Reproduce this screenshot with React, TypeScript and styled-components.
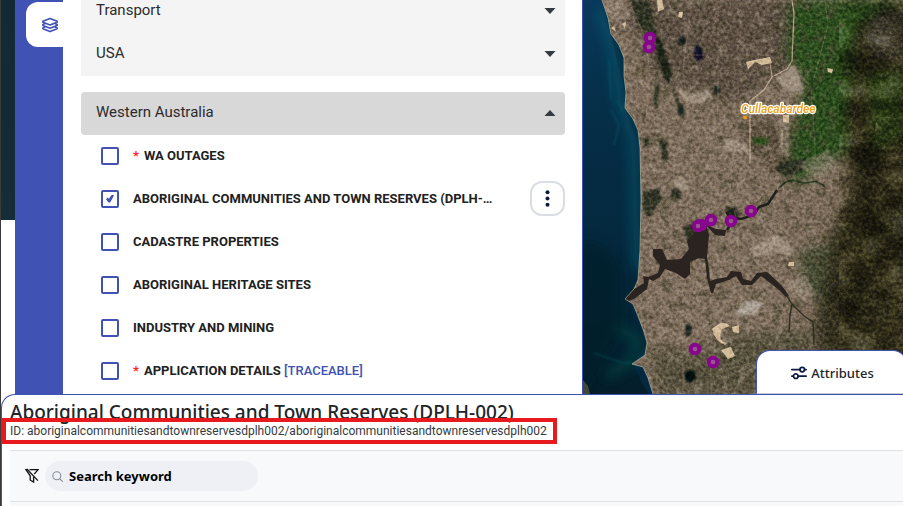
import React, { useState } from "react";
import styled, { createGlobalStyle } from "styled-components";

const brand = "#4052b3";
const ui = `Roboto, "Liberation Sans", sans-serif`;
const body = `"Noto Sans", "Open Sans", sans-serif`;

const GlobalStyle = createGlobalStyle`
  *, *::before, *::after { box-sizing: border-box; }
  html, body, #root { height: 100%; }
  body { margin: 0; overflow: hidden; background: #fff; color: #212529; font-family: ${ui}; }
  button, input { font: inherit; color: inherit; }
`;

const Page = styled.div`
  display: flex;
  flex-direction: column;
  height: 100vh;
  border-left: 1px solid #3a3a3a;
`;

const Workspace = styled.main`
  display: grid;
  grid-template-columns: 14px 48px minmax(0, 519fr) minmax(0, 321fr);
  grid-template-rows: minmax(0, 1fr);
  flex: 1;
  min-height: 0;
  overflow: hidden;
`;

const MapSliver = styled.div`
  height: 220px;
  background: linear-gradient(#122a36, #142b37 60%, #152c39);
`;

const Rail = styled.nav`
  padding-top: 2px;
  padding-left: 11px;
  background: ${brand};
`;

const RailButton = styled.button`
  display: flex;
  align-items: center;
  justify-content: center;
  width: 100%;
  height: 45px;
  padding: 0 0 0 10px;
  border: 0;
  border-radius: 12px 0 0 12px;
  background: #fff;
  color: ${brand};
`;

const LayerPanel = styled.section`
  display: flex;
  flex-direction: column;
  min-width: 0;
  padding: 0 17px 0 18px;
  background: #fff;
`;

const ClosedGroups = styled.div`
  flex: none;
  height: 76px;
  margin-bottom: 16px;
  display: flex;
  flex-direction: column;
  justify-content: flex-end;
  background: #f4f4f4;
`;

const GroupHeader = styled.button<{ $open?: boolean }>`
  display: flex;
  align-items: center;
  justify-content: space-between;
  flex: none;
  width: 100%;
  height: 43px;
  padding: 0 9px 3px 15px;
  border: 0;
  border-radius: ${(p) => (p.$open ? "4px" : "0")};
  background: ${(p) => (p.$open ? "#d8d8d8" : "transparent")};
  color: #2b2b2b;
  font-size: 15px;
  line-height: 20px;
  text-align: left;
`;

const Caret = styled.svg`
  width: 12px;
  height: 6px;
  margin-top: 2px;
  fill: #343a40;
`;

const LayerList = styled.ul`
  margin: 0;
  padding: 0;
  list-style: none;
`;

const LayerRow = styled.li`
  display: flex;
  align-items: center;
  gap: 14px;
  height: 43px;
  padding-bottom: 2px;
  padding-left: 20px;
`;

const LayerLabel = styled.label`
  display: flex;
  align-items: center;
  gap: 14px;
  min-width: 0;
  flex: 1;
  color: #212121;
  font-size: 13px;
  font-weight: 700;
  line-height: 20px;
`;

const LayerName = styled.span`
  white-space: nowrap;
`;

const Tick = styled.input`
  appearance: none;
  flex: none;
  width: 18px;
  height: 18px;
  margin: 0;
  border: 2px solid ${brand};
  border-radius: 2px;
  background: #fff;
  display: grid;
  place-items: center;
  &:checked::before {
    content: "";
    width: 8px;
    height: 8px;
    background: ${brand};
    clip-path: polygon(0 58%, 18% 38%, 36% 52%, 74% 0, 100% 12%, 52% 100%, 32% 100%);
  }
`;

const Required = styled.span`
  margin-right: 5px;
  color: #ff1d25;
`;

const Tag = styled.span`
  color: ${brand};
  font-weight: 500;
`;

const MenuButton = styled.button`
  display: grid;
  place-items: center;
  flex: none;
  width: 35px;
  height: 35px;
  padding: 0;
  border: 2px solid #dadde3;
  border-radius: 12px;
  background: #fff;
`;

const MapPane = styled.section`
  position: relative;
  min-width: 0;
  border-left: 1px solid ${brand};
  background: #6b5a4b;
`;

const MapDrawing = styled.svg`
  display: block;
  width: 100%;
  height: 100%;
`;

const AttributesTab = styled.button`
  position: absolute;
  right: -4px;
  bottom: 0;
  display: flex;
  align-items: center;
  justify-content: center;
  gap: 4px;
  width: 151px;
  height: 44px;
  padding: 2px 0 0 2px;
  border: 1px solid ${brand};
  border-bottom-color: #c8cad0;
  border-radius: 14px 14px 0 0;
  background: #fff;
  color: #212529;
  font-family: ${body};
  font-size: 13px;
  font-weight: 500;
`;

const Dock = styled.section`
  flex: none;
  height: 112px;
  padding-left: 8px;
  border-top: 1px solid ${brand};
  border-left: 1px solid ${brand};
  border-top-left-radius: 14px;
  background: #fff;
  font-family: ${body};
`;

const DockHeader = styled.header`
  height: 55px;
  padding-top: 5px;
`;

const DockTitle = styled.h1`
  margin: 0;
  height: 23px;
  color: #212529;
  font-size: 19px;
  font-weight: 500;
  line-height: 24px;
  white-space: nowrap;
`;

const LayerId = styled.p`
  position: relative;
  width: max-content;
  margin: 0;
  color: #343a40;
  font-family: ${ui};
  font-size: 12px;
  line-height: 16px;
  white-space: nowrap;
`;

const Highlight = styled.span`
  position: absolute;
  inset: -5px -10px -5px -8px;
  border: 4px solid #e81a1d;
`;

const Toolbar = styled.form`
  display: flex;
  align-items: center;
  gap: 6px;
  height: 52px;
  padding-left: 15px;
  border-top: 1px solid #dee2e6;
  border-bottom: 1px solid #dee2e6;
  background: #f8f9fb;
`;

const GridHeader = styled.div`
  height: 4px;
  background: #f8f9fb;
`;

const IconButton = styled.button`
  display: grid;
  place-items: center;
  width: 14px;
  height: 18px;
  padding: 0;
  border: 0;
  background: none;
`;

const SearchBox = styled.label`
  display: flex;
  align-items: center;
  gap: 6px;
  width: 213px;
  height: 30px;
  padding: 0 10px 0 7px;
  border-radius: 15px;
  background: #eff0f6;
`;

const SearchInput = styled.input`
  flex: 1;
  min-width: 0;
  padding: 0;
  border: 0;
  outline: 0;
  background: none;
  font-family: ${body};
  font-size: 13px;
  font-weight: 700;
  &::placeholder { color: #000; opacity: 1; }
`;

type Layer = { name: string; required?: boolean; tag?: string; menu?: boolean };

const layers: Layer[] = [
  { name: "WA OUTAGES", required: true },
  { name: "ABORIGINAL COMMUNITIES AND TOWN RESERVES (DPLH-…", menu: true },
  { name: "CADASTRE PROPERTIES" },
  { name: "ABORIGINAL HERITAGE SITES" },
  { name: "INDUSTRY AND MINING" },
  { name: "APPLICATION DETAILS", required: true, tag: "[TRACEABLE]" },
];

const LayersIcon = () => (
  <svg width="18" height="16" viewBox="0 0 18 16" fill="none" stroke="currentColor" strokeWidth="1.6" strokeLinejoin="round" aria-hidden="true">
    <path d="M9 1.4 16.1 4.2V5.2L9 8 1.9 5.2V4.2Z" />
    <path d="M4.2 6.6 1.9 7.6V8.5L9 11.3 16.1 8.5V7.6L13.8 6.6" />
    <path d="M4.2 9.9 1.9 10.9V11.8L9 14.6 16.1 11.8V10.9L13.8 9.9" />
  </svg>
);

const SlidersIcon = () => (
  <svg width="16" height="14" viewBox="0 0 16 14" fill="none" stroke="#0d1b3e" strokeWidth="1.7" strokeLinecap="round" aria-hidden="true">
    <path d="M.8 3.6H8.7M13.7 3.6H15.2M.8 10.2H2.3M7.3 10.2H15.2" />
    <circle cx="11.2" cy="3.6" r="2.3" />
    <circle cx="4.8" cy="10.2" r="2.3" />
  </svg>
);

const FilterOffIcon = () => (
  <svg width="14" height="16" viewBox="0 0 14 16" fill="none" stroke="#111" strokeWidth="1.3" aria-hidden="true">
    <path d="M4.5 1.6H13L9.2 6.2M8.6 8.6V14L5.2 12V7.8L.9 1.6H2.5" />
    <path d="M1.9 1 12.9 12.6" />
  </svg>
);

const SearchIcon = () => (
  <svg width="11" height="11" viewBox="0 0 11 11" fill="none" stroke="#868e96" strokeWidth="1.1" strokeLinecap="round" aria-hidden="true">
    <circle cx="4.8" cy="4.8" r="4" />
    <path d="m7.8 7.8 2.6 2.6" />
  </svg>
);

const DotsIcon = () => (
  <svg width="5" height="17" viewBox="0 0 5 17" fill="#0d1b3e" aria-hidden="true">
    <circle cx="2.5" cy="2.2" r="2" />
    <circle cx="2.5" cy="8.5" r="2" />
    <circle cx="2.5" cy="14.8" r="2" />
  </svg>
);

const communities = [
  [67, 38], [66, 47], [118, 225], [115, 226], [128, 220], [148, 221], [168, 211], [112, 349], [130, 362],
];

const coast = "M19 0 25 18 28 34 36 45 41 58 41 76 43 92 42 108 50 119 55 130 57 148 58 200 57 250 55 280 51 289 42 299 50 304 55 316 61 332 64 343 62 355 49 364 60 367 65 378 70 394";

const Satellite = () => (
  <MapDrawing viewBox="0 0 320 394" preserveAspectRatio="xMinYMin slice" role="img" aria-label="Satellite map of Perth">
    <defs>
      <linearGradient id="deep" x1="0" x2="0" y1="0" y2="1">
        <stop offset="0" stopColor="#0a3d62" stopOpacity=".8" />
        <stop offset=".45" stopColor="#06324a" stopOpacity=".3" />
        <stop offset="1" stopColor="#031a22" stopOpacity=".75" />
      </linearGradient>
      <filter id="grain" x="0" y="0" width="100%" height="100%" colorInterpolationFilters="sRGB">
        <feTurbulence type="fractalNoise" baseFrequency=".3" numOctaves="4" seed="7" />
        <feColorMatrix values="1.8 0 0 0 -.37  1.7 .1 0 0 -.37  1.6 0 .2 0 -.37  0 0 0 0 1" />
      </filter>
      <filter id="ridges" x="0" y="0" width="100%" height="100%" colorInterpolationFilters="sRGB">
        <feTurbulence type="fractalNoise" baseFrequency=".03 .04" numOctaves="5" seed="11" />
        <feColorMatrix values="2.5 0 0 0 -.8  2.5 0 0 0 -.8  2.5 0 0 0 -.9  0 0 0 0 1" />
      </filter>
      <filter id="scrub" x="0" y="0" width="100%" height="100%" colorInterpolationFilters="sRGB">
        <feTurbulence type="fractalNoise" baseFrequency=".09" numOctaves="5" seed="23" />
        <feColorMatrix values="0 0 0 0 .29  0 0 0 0 .27  0 0 0 0 .18  5 0 0 0 -2.6" />
      </filter>
      <filter id="roofs" x="0" y="0" width="100%" height="100%" colorInterpolationFilters="sRGB">
        <feTurbulence type="fractalNoise" baseFrequency=".11" numOctaves="5" seed="5" />
        <feColorMatrix values="0 0 0 0 .62  0 0 0 0 .56  0 0 0 0 .49  0 6 0 0 -3.3" />
      </filter>
      <filter id="soft" x="-20%" y="-20%" width="140%" height="140%"><feGaussianBlur stdDeviation="6" /></filter>
      <filter id="edge" x="-20%" y="-20%" width="140%" height="140%"><feGaussianBlur stdDeviation=".8" /></filter>
      <clipPath id="landClip"><path d={`${coast}H900V0Z`} /></clipPath>
    </defs>

    <rect width="900" height="900" fill="#04283f" />
    <path d="M0 0H19L42 92V108L57 148V280L45 300 64 343 50 364 65 394H0Z" fill="url(#deep)" />
    <g filter="url(#soft)" fill="none" stroke="#0c6475" opacity=".6">
      <path d="M16 10 30 50 37 100 50 140 54 270" strokeWidth="8" />
      <path d="M30 325 55 340 52 360 24 375" strokeWidth="7" stroke="#0c5a4e" />
    </g>
    <path d="M-20 240Q30 235 40 270V330L-20 420Z" fill="#031c26" filter="url(#soft)" opacity=".6" />
    <g fill="none" stroke="#168088" strokeWidth="1" opacity=".45" filter="url(#edge)">
      <path d="M26 60 28 100M28 110 36 125 31 145M34 100 40 112M10 353 40 363 55 363" />
    </g>

    <g clipPath="url(#landClip)">
      <rect width="900" height="900" fill="#7d6c5b" />
      <g filter="url(#soft)">
        <path d="M42 0H215L210 65 150 105 100 88 70 78 45 20Z" fill="#5a4e3f" />
        <path d="M206 0H330V80L275 100 266 150 210 185 200 142 214 120 222 78 202 60Z" fill="#2a4b1a" />
        <path d="M275 25 340-10V410H240L232 330 240 250 266 190 262 120Z" fill="#322f1f" />
        <path d="M160 120H205L208 145 195 175 165 150Z" fill="#5c4e3c" />
        <path d="M70 345 110 355 150 335 225 330 235 394H72Z" fill="#544f3a" />
        <path d="M215 250 245 245 240 300 222 290Z" fill="#444c30" />
      </g>
      <rect width="262" height="394" filter="url(#scrub)" opacity=".5" />
      <rect width="200" height="394" filter="url(#roofs)" opacity=".45" />
      <g filter="url(#edge)" fill="#2d3322">
        <path d="M48 0H66L74 35 69 38 53 22Z" />
        <path d="M72 35 78 40 88 70 87 85 81 78 73 55Z" fill="#1e2418" />
        <path d="M87 82 98 105 101 113 98 117 92 98Z" />
        <path d="M73 82 77 86 74 110 70 102Z" />
        <path d="M60 192 76 188 79 199 66 218 60 210Z" />
        <path d="M100 228 110 222 120 229 106 245Z" />
        <path d="M195 162 225 158 220 170 202 177 193 170Z" />
        <path d="M76 138 84 140 85 162 79 160Z" />
        <path d="M142 207 152 207 158 215 147 221Z" />
        <path d="M60 136 66 138 66 148 61 146Z" />
        <path d="M88 190 97 186 98 199 87 200Z" />
        <path d="M168 138 186 137 184 145 171 144Z" fill="#2c481c" />
      </g>
      <g fill="#18201a" filter="url(#edge)">
        <ellipse cx="99" cy="41" rx="4" ry="5" />
        <path d="M112 45 118 47 121 57 117 62 111 57Z" fill="#0d1120" />
        <ellipse cx="134" cy="90" rx="3" ry="5" />
        <ellipse cx="98" cy="110" rx="3" ry="6" />
        <ellipse cx="105" cy="330" rx="3" ry="7" />
        <ellipse cx="107" cy="376" rx="6" ry="6" fill="#06100e" />
      </g>
      <g fill="#a39483" filter="url(#edge)" opacity=".85">
        <path d="M95 88 110 94 127 90 128 96 118 105 99 99Z" />
        <path d="M193 79 211 64 217 76 221 93 209 92 200 88Z" />
        <path d="M141 137 165 145V152L141 151Z" />
        <path d="M91 179 98 177 107 187 100 192 89 185Z" />
        <path d="M167 248 193 234 211 248 208 256 190 252 172 257Z" />
        <path d="M152 312 165 301 180 302 172 314 154 316Z" fill="#b3aaa0" />
        <path d="M201 284 222 275 231 292 222 303 210 296Z" opacity=".6" />
        <path d="M197 118 206 122 206 158 195 153Z" opacity=".6" />
        <path d="M20 3 42 0 48 18 30 20Z" opacity=".5" />
        <path d="M214 165 245 150 255 165 236 180Z" opacity=".5" />
      </g>
      <g fill="#d1ba98">
        <path d="M74 0H79L81 9 75 12ZM96 12H100L99 18 95 17ZM39 24 43 22 42 29ZM163 62 171 60 187 57 189 63 179 65 172 62 165 69Z" />
        <path d="M129 329Q140 319 147 326L139 329Q134 341 144 343L142 345Q132 341 129 329ZM149 327 156 325 156 333 150 332ZM138 350 148 347 152 356 145 359Z" />
        <path d="M28 28 31 26 33 32ZM244 68 250 69 249 73 245 72ZM293 122 299 128 292 131ZM200 115H206V123L200 122ZM206 262H211V266L205 266Z" />
      </g>
      <g fill="none" stroke="#cbb299" strokeLinejoin="round" opacity=".8">
        <path d="M209 0 211 14 209 61 204 69 189 77 181 90 167 101 167 164" strokeWidth="1.3" />
        <path d="M199 130V145M189 77 187 62" strokeWidth="1" />
      </g>
      <g fill="none" stroke="#9a8874" strokeWidth=".7" opacity=".5">
        <path d="M45 0 60 32 67 70 61 145M109 0 100 70 112 180M135 0V95L132 190M164 44V70M100 55H188M97 73H155M140 45H190M155 31V95M58 150H90L150 146 190 150M64 170H188M91 120V178M183 75V187M58 206H110M190 195 225 205 250 192M155 230V270M127 260 225 273M58 276H115L207 280M67 315H135L218 308M78 280V370M100 260V394M128 266V394M155 283V320M188 275V330M65 338H105M75 350 140 370 220 350M242 0 245 25 228 90 232 145" />
      </g>
      <g fill="none" stroke="#1b3216" strokeLinecap="round" strokeWidth="1.8" opacity=".8">
        <path d="M196 188Q205 178 213 181T228 182T242 187M231 88Q242 80 250 76M222 100Q232 86 229 78" />
      </g>
      <g fill="#12140c" filter="url(#soft)" opacity=".65">
        <path d="M270 35 308 2 310 12 286 42 270 80 257 75Z" />
        <path d="M285 200 320 205V245L291 260 276 245ZM240 285 280 276 315 309 285 330 256 311ZM264 138 300 142 294 174 267 160Z" />
      </g>
      <path d="M284 20 320 5V70L285 50Z" fill="#474337" filter="url(#soft)" opacity=".7" />
      <path d="M280 70H320V140L290 150Z" fill="#263a17" filter="url(#soft)" opacity=".8" />
      <rect width="900" height="900" filter="url(#grain)" style={{ mixBlendMode: "soft-light" }} opacity=".5" />
      <rect x="256" width="655" height="900" filter="url(#ridges)" style={{ mixBlendMode: "soft-light" }} opacity=".4" />
      <g fill="none" stroke="#6a6538" strokeWidth="1" opacity=".6" filter="url(#edge)">
        <path d="M276 228 283 245 280 260 293 270 297 286 316 291M290 254 306 263 318 260M284 104 292 115 283 128 297 134M302 195 292 206 294 216" />
      </g>
      <g fill="#2a231f">
        <path d="M40 300 51 289 61 283 60 276 65 277 75 273 77 265 70 256V249L79 249 84 260 98 259 106 249 104 241 115 228 123 224 126 235 124 257 126 269 127 281 133 279 144 277 148 271 158 272 160 279 168 281 174 273 184 272 192 279 200 287 206 296 203 297 196 290 186 282 178 276 169 285 159 285 153 276 146 280 133 284 130 293 128 293 124 278 122 259 116 258 107 262 107 274 102 279 93 273 82 269 77 277 70 281 66 279 64 289 51 299 42 302Z" />
        <path d="M122 224 133 229 143 230 142 236 132 235Z" />
        <path d="M144 230 149 222 144 213 149 210 151 218 158 219 171 215 176 207 185 204 194 190" fill="none" stroke="#1c1f19" strokeWidth="2.4" />
        <path d="M204 296 209 304 221 316 230 322 231 345M209 304 207 315 206 332" fill="none" stroke="#2b2d1f" strokeWidth="1.4" />
      </g>
    </g>
    <path d={coast} fill="none" stroke="#c7c1a5" strokeWidth="1" opacity=".6" />
    <path d="M0 380 5 386 7 394H0Z" fill="#424838" />
    <g fill="#9b558e" stroke="#87078c" strokeWidth="4">
      {communities.map(([x, y]) => <circle key={`${x}-${y}`} cx={x} cy={y} r="4.3" />)}
    </g>
    <circle cx="162" cy="117.5" r="2" fill="#f09a13" />
    <text x="158" y="113" fill="#f0a020" stroke="#fff" strokeWidth="2.4" paintOrder="stroke" strokeLinejoin="round" fontFamily="Roboto, sans-serif" fontSize="12" fontWeight="500" fontStyle="italic">Cullacabardee</text>
  </MapDrawing>
);

export default function App() {
  const [checked, setChecked] = useState<string[]>([layers[1].name]);
  const toggle = (name: string) =>
    setChecked((now) => (now.includes(name) ? now.filter((n) => n !== name) : [...now, name]));

  return (
    <>
      <GlobalStyle />
      <Page>
        <Workspace>
          <MapSliver />
          <Rail aria-label="Tools">
            <RailButton type="button" aria-label="Layers"><LayersIcon /></RailButton>
          </Rail>
          <LayerPanel aria-label="Layers">
            <ClosedGroups>
              {["Transport", "USA"].map((name) => (
                <GroupHeader key={name} type="button" aria-expanded={false}>
                  {name}
                  <Caret viewBox="0 0 12 6" aria-hidden="true"><path d="M.5 0h11L6 6Z" /></Caret>
                </GroupHeader>
              ))}
            </ClosedGroups>
            <GroupHeader type="button" $open aria-expanded>
              Western Australia
              <Caret viewBox="0 0 12 6" aria-hidden="true"><path d="M.5 6h11L6 0Z" /></Caret>
            </GroupHeader>
            <LayerList>
              {layers.map((layer) => (
                <LayerRow key={layer.name}>
                  <LayerLabel>
                    <Tick type="checkbox" checked={checked.includes(layer.name)} onChange={() => toggle(layer.name)} />
                    <LayerName>
                      {layer.required && <Required>*</Required>}
                      {layer.name}
                      {layer.tag && <> <Tag>{layer.tag}</Tag></>}
                    </LayerName>
                  </LayerLabel>
                  {layer.menu && <MenuButton type="button" aria-label="Layer options"><DotsIcon /></MenuButton>}
                </LayerRow>
              ))}
            </LayerList>
          </LayerPanel>
          <MapPane aria-label="Map">
            <Satellite />
            <AttributesTab type="button"><SlidersIcon />Attributes</AttributesTab>
          </MapPane>
        </Workspace>
        <Dock>
          <DockHeader>
            <DockTitle>Aboriginal Communities and Town Reserves (DPLH-002)</DockTitle>
            <LayerId>
              ID: aboriginalcommunitiesandtownreservesdplh002/aboriginalcommunitiesandtownreservesdplh002
              <Highlight />
            </LayerId>
          </DockHeader>
          <Toolbar>
            <IconButton type="button" aria-label="Clear filters"><FilterOffIcon /></IconButton>
            <SearchBox>
              <SearchIcon />
              <SearchInput type="search" placeholder="Search keyword" aria-label="Search keyword" />
            </SearchBox>
          </Toolbar>
          <GridHeader />
        </Dock>
      </Page>
    </>
  );
}
